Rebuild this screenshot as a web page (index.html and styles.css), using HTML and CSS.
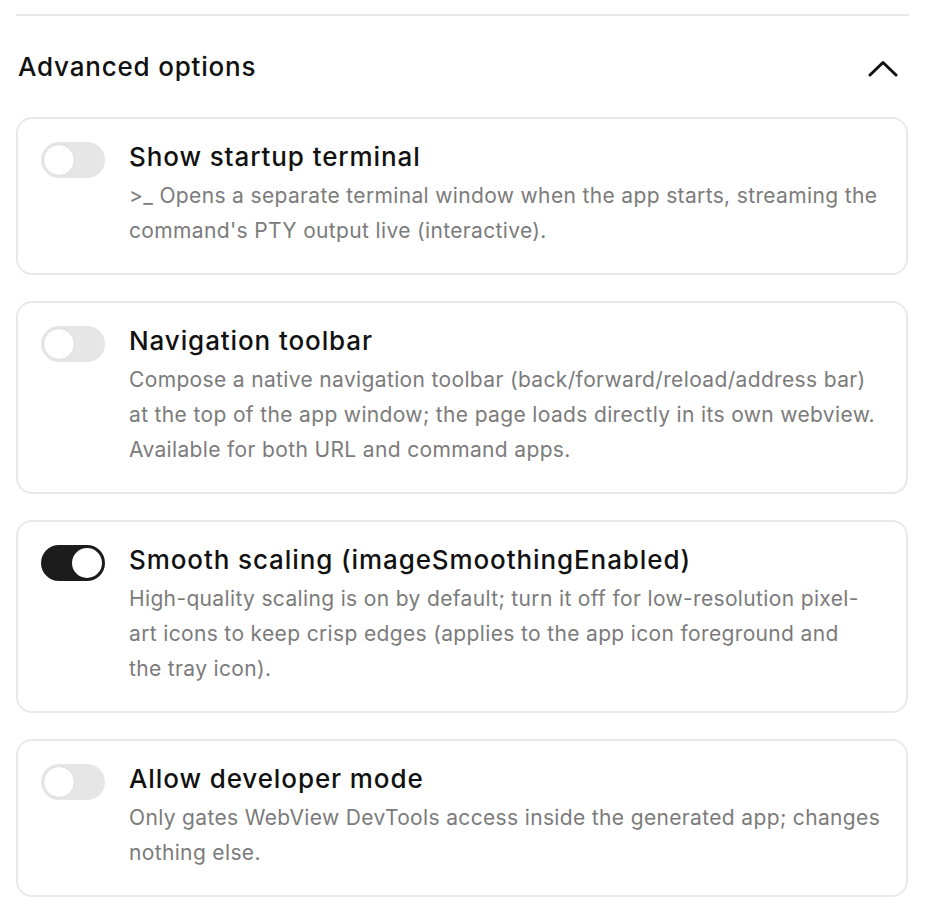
FILE: index.html
```html
<!DOCTYPE html>
<html lang="en">
<head>
<meta charset="utf-8">
<title>Advanced options</title>
<link rel="stylesheet" href="styles.css">
</head>
<body>
<section class="panel">
  <div class="divider"></div>
  <header class="section-head">
    <h2 class="section-title">Advanced options</h2>
    <button class="collapse" type="button" aria-label="Collapse">
      <svg width="30" height="17" viewBox="0 0 30 17" fill="none" stroke="#111" stroke-width="3" stroke-linecap="round" stroke-linejoin="round"><path d="M2 15L15 2.5L28 15"/></svg>
    </button>
  </header>
  <div class="options">
    <div class="option">
      <span class="toggle"><span class="knob"></span></span>
      <div class="option-text">
        <div class="option-title">Show startup terminal</div>
        <p class="option-desc">&gt;_ Opens a separate terminal window when the app starts, streaming the command's PTY output live (interactive).</p>
      </div>
    </div>
    <div class="option">
      <span class="toggle"><span class="knob"></span></span>
      <div class="option-text">
        <div class="option-title">Navigation toolbar</div>
        <p class="option-desc">Compose a native navigation toolbar (back/forward/reload/address bar) at the top of the app window; the page loads directly in its own webview. Available for both URL and command apps.</p>
      </div>
    </div>
    <div class="option">
      <span class="toggle on"><span class="knob"></span></span>
      <div class="option-text">
        <div class="option-title">Smooth scaling (imageSmoothingEnabled)</div>
        <p class="option-desc">High-quality scaling is on by default; turn it off for low-resolution pixel-art icons to keep crisp edges (applies to the app icon foreground and the&nbsp;tray icon).</p>
      </div>
    </div>
    <div class="option">
      <span class="toggle"><span class="knob"></span></span>
      <div class="option-text">
        <div class="option-title">Allow developer mode</div>
        <p class="option-desc">Only gates WebView DevTools access inside the generated app; changes nothing else.</p>
      </div>
    </div>
  </div>
</section>
</body>
</html>
```

FILE: styles.css
```css
* { box-sizing: border-box; }
html, body { margin: 0; padding: 0; background: #fff; }
body {
  font-family: "Inter", "Liberation Sans", "Noto Sans CJK SC", sans-serif;
  color: #111;
}
.panel {
  padding: 14px 18px 0 16px;
}
.divider {
  height: 2px;
  background: #e8e8e8;
  margin-right: -1px;
}
.section-head {
  height: 101px;
  display: flex;
  align-items: center;
  justify-content: space-between;
  padding-left: 2px;
  padding-right: 10px;
}
.section-title {
  margin: 0;
  font-size: 26px;
  font-weight: 500;
  line-height: 36px;
  letter-spacing: 0.8px;
}
.collapse {
  border: 0;
  background: none;
  padding: 0;
  margin-top: 4px;
  display: flex;
}
.options {
  display: flex;
  flex-direction: column;
  gap: 26px;
}
.option {
  display: flex;
  gap: 24px;
  border: 2px solid #e9e9e9;
  border-radius: 16px;
  padding: 20px 25px 25px 23px;
}
.toggle {
  flex: none;
  width: 64px;
  height: 36px;
  margin-top: 3px;
  border-radius: 18px;
  background: #e6e6e6;
  display: flex;
  align-items: center;
  padding: 2px;
}
.knob {
  width: 32px;
  height: 32px;
  border-radius: 50%;
  background: #fff;
  border: 1px solid #dadada;
}
.toggle.on {
  background: #1c1c1c;
  justify-content: flex-end;
}
.toggle.on .knob {
  border: 2px solid #1c1c1c;
  width: 34px;
  height: 34px;
  margin-right: -1px;
}
.option-text {
  flex: 1;
  min-width: 0;
}
.option-title {
  font-size: 26px;
  font-weight: 500;
  line-height: 36px;
  letter-spacing: 0.9px;
  color: #111;
}
.option-desc {
  margin: 3px 0 0;
  font-size: 21px;
  line-height: 35px;
  color: #7b7b7b;
  letter-spacing: 0.35px;
}
```
